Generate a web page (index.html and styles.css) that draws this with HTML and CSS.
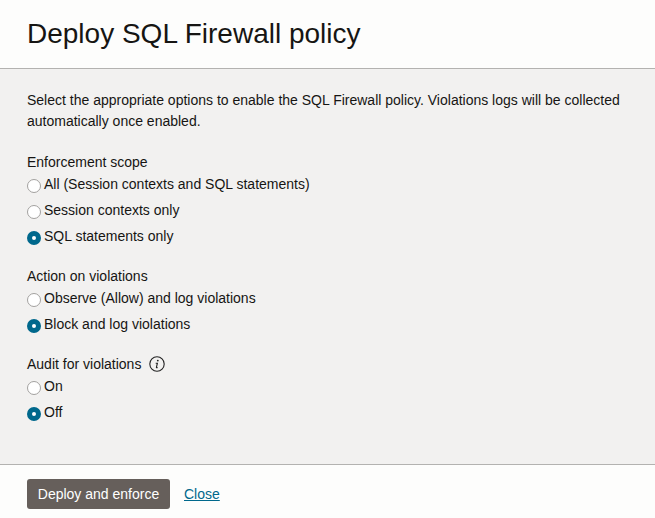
FILE: index.html
```html
<!DOCTYPE html>
<html lang="en">
<head>
<meta charset="utf-8">
<title>Deploy SQL Firewall policy</title>
<link rel="stylesheet" href="styles.css">
</head>
<body>
<div class="panel">
  <header class="panel-header"><h1>Deploy SQL Firewall policy</h1></header>
  <main class="panel-body">
    <p class="intro">Select the appropriate options to enable the SQL Firewall policy. Violations logs will be collected automatically once enabled.</p>
    <fieldset>
      <legend>Enforcement scope</legend>
      <label><input type="radio" name="scope"><span>All (Session contexts and SQL statements)</span></label>
      <label><input type="radio" name="scope"><span>Session contexts only</span></label>
      <label><input type="radio" name="scope" checked><span>SQL statements only</span></label>
    </fieldset>
    <fieldset>
      <legend>Action on violations</legend>
      <label><input type="radio" name="action"><span>Observe (Allow) and log violations</span></label>
      <label><input type="radio" name="action" checked><span>Block and log violations</span></label>
    </fieldset>
    <fieldset>
      <legend>Audit for violations
        <svg class="info" viewBox="0 0 16 16"><circle cx="8" cy="8" r="7.2" fill="none" stroke="#222" stroke-width="1.1"/><circle cx="8.8" cy="4.6" r="0.9" fill="#222"/><path d="M6.7 7.2h1.7l-1 4.2q-.1.6 1.3.1" fill="none" stroke="#222" stroke-width="1.1"/></svg>
      </legend>
      <label><input type="radio" name="audit"><span>On</span></label>
      <label><input type="radio" name="audit" checked><span>Off</span></label>
    </fieldset>
  </main>
  <footer class="panel-footer">
    <button type="button">Deploy and enforce</button>
    <a href="#">Close</a>
  </footer>
</div>
</body>
</html>
```
FILE: styles.css
```css
* { box-sizing: border-box; }
body {
  margin: 0;
  background: #fdfdfc;
  color: #161513;
  font: 14px/21px "Liberation Sans", Arial, sans-serif;
}
.panel { display: flex; flex-direction: column; height: 518px; }
.panel-header { height: 69px; padding: 16px 27px 0; border-bottom: 1px solid #b3b2b0; }
h1 { margin: 0; font-size: 28px; line-height: 35px; font-weight: 400; }
.panel-body { flex: 1; padding: 21px 27px 0; background: #f2f1f0; }
.intro { margin: 0 0 20px; }
fieldset { margin: 0 0 16px; padding: 0; border: 0; }
legend { display: flex; align-items: center; gap: 8px; height: 20px; padding: 0; }
.info { width: 16px; height: 16px; }
label { display: flex; gap: 3px; height: 26px; line-height: 24px; }
input {
  appearance: none;
  width: 14px;
  height: 14px;
  margin: 7px 0 0;
  border: 1px solid #a3a19f;
  border-radius: 50%;
  background: #fff;
}
input:checked { border: 5px solid #00688c; }
.panel-footer { display: flex; align-items: center; gap: 14px; height: 54px; padding: 5px 27px 0; border-top: 1px solid #b3b2b0; }
button { width: 143px; height: 30px; padding: 0; border: 0; border-radius: 3px; background: #665f5b; color: #fff; font: inherit; }
a { color: #00688c; text-decoration: underline; }
```
